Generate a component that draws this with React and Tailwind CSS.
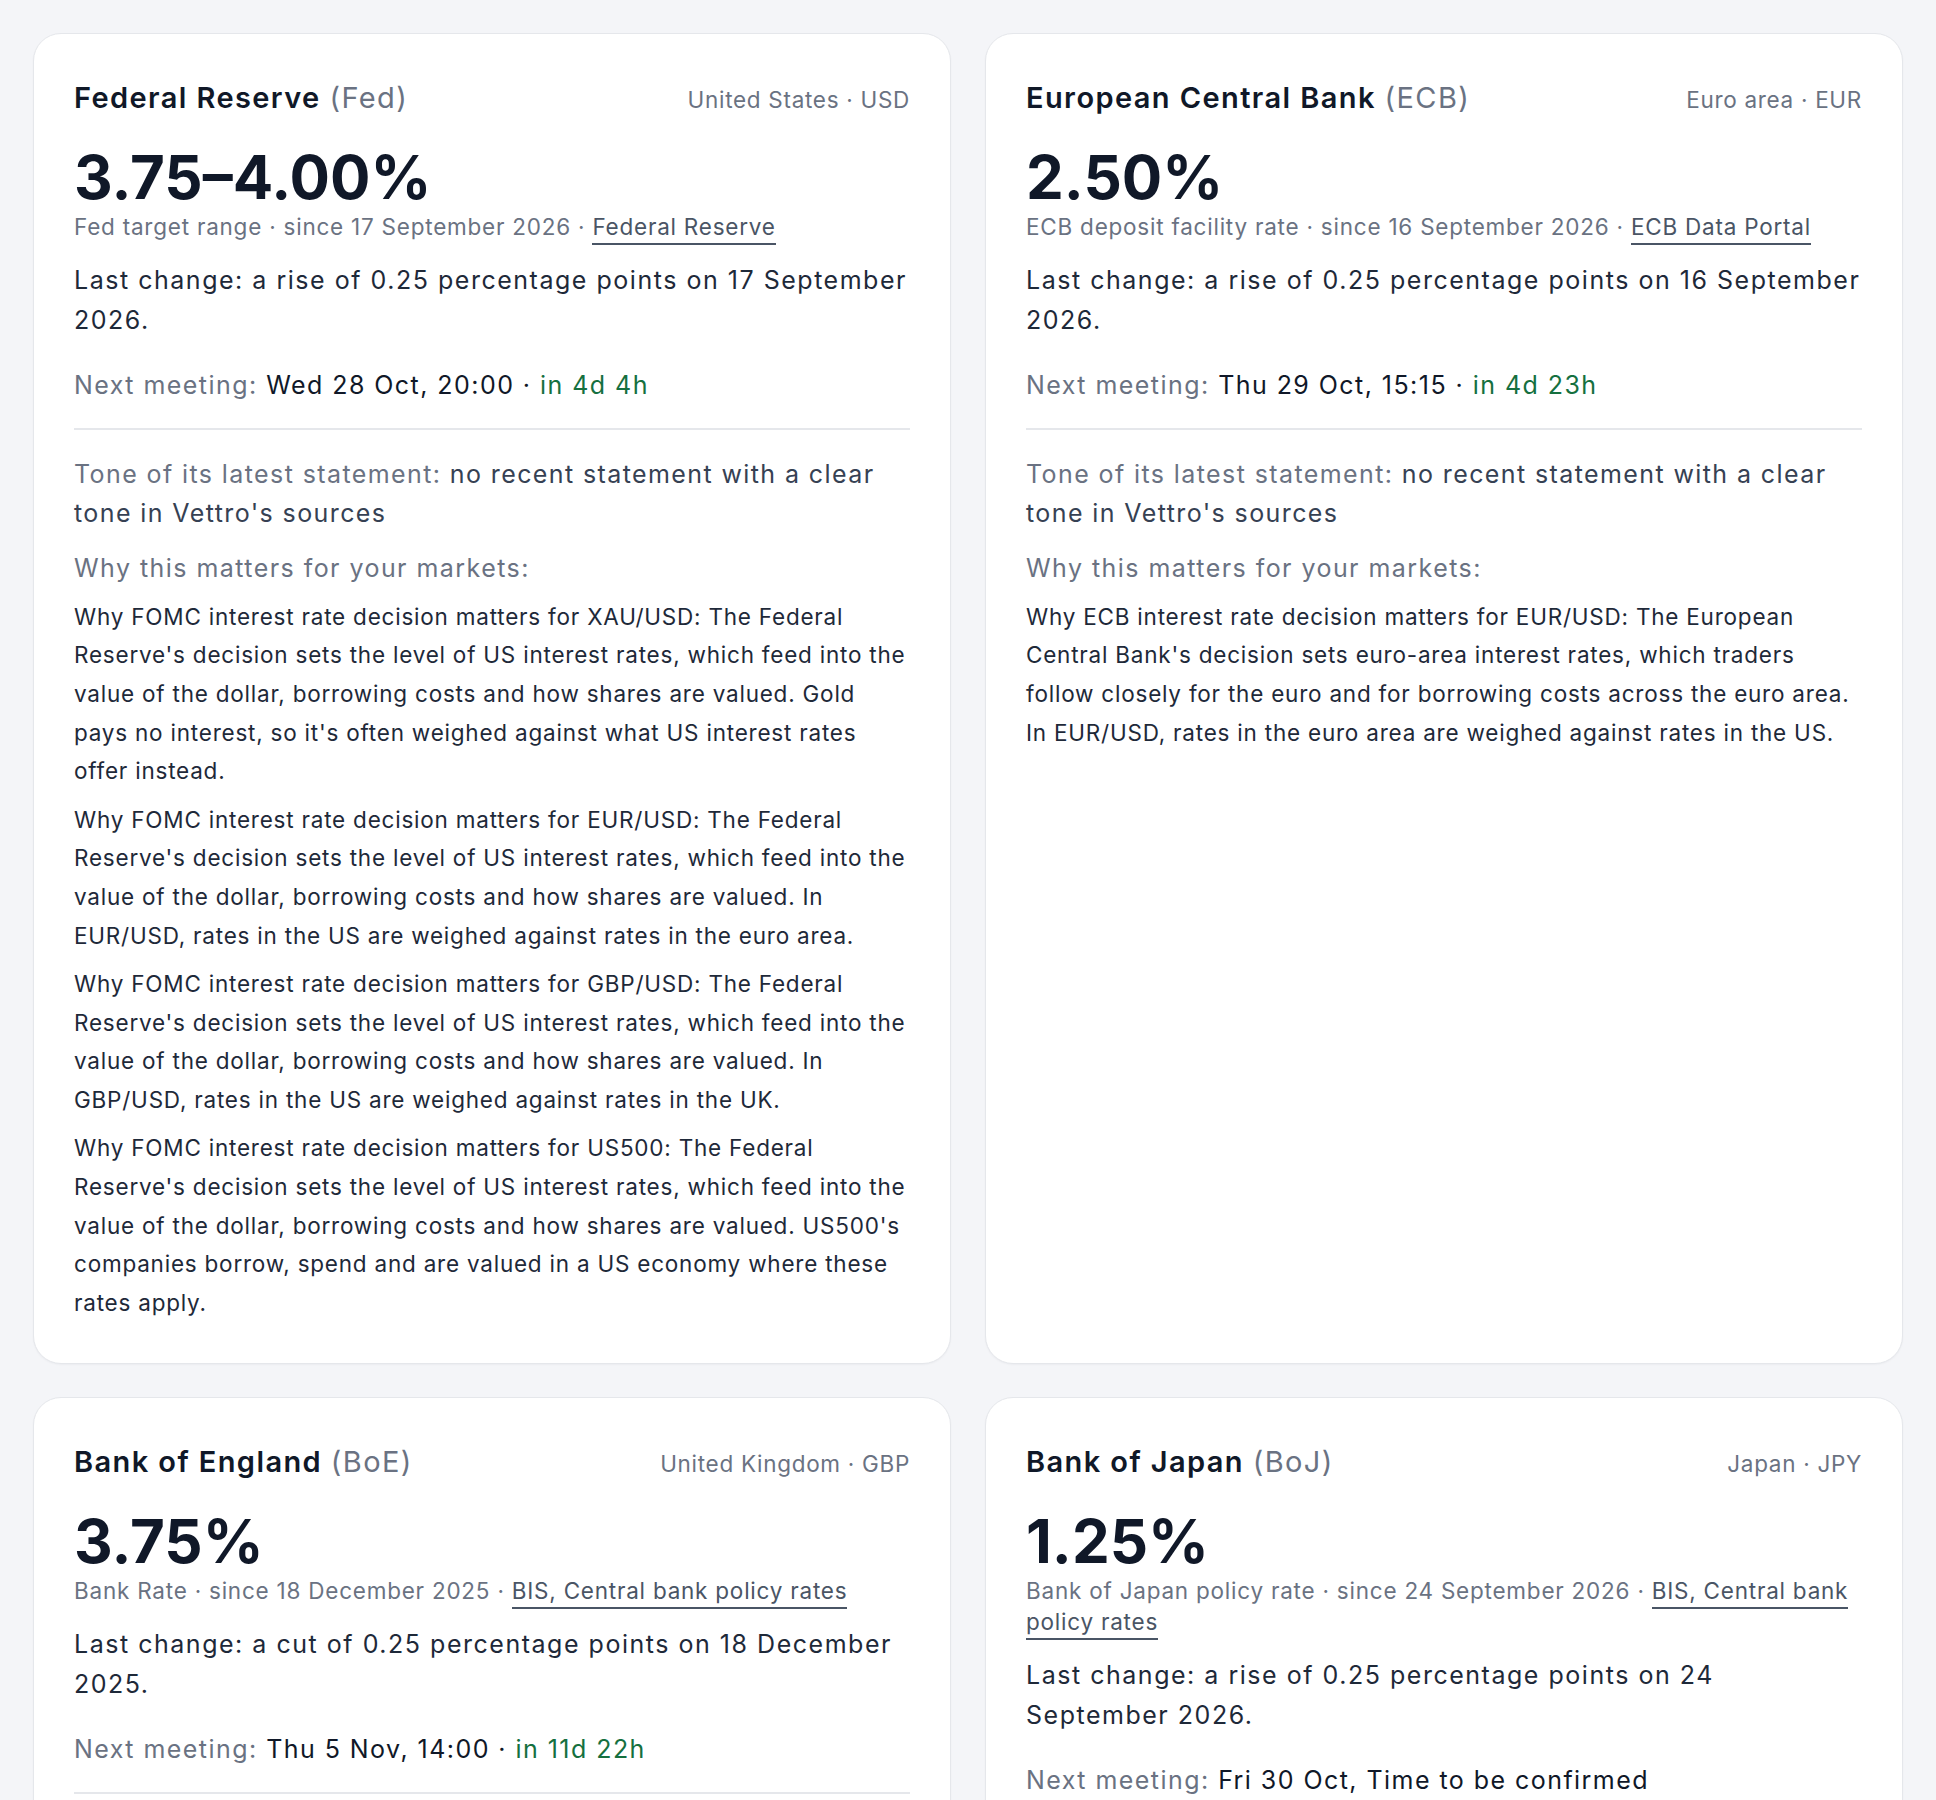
import React from 'react';

const banks = [
    {
        name: 'Federal Reserve',
        short: 'Fed',
        region: 'United States · USD',
        rate: '3.75–4.00%',
        rateName: 'Fed target range',
        since: '17 September 2026',
        source: 'Federal Reserve',
        lastChange: 'a rise of 0.25 percentage points on 17 September 2026.',
        meeting: 'Wed 28 Oct, 20:00',
        countdown: 'in 4d 4h',
        tone: "no recent statement with a clear tone in Vettro's sources",
        reasons: [
            "Why FOMC interest rate decision matters for XAU/USD: The Federal Reserve's decision sets the level of US interest rates, which feed into the value of the dollar, borrowing costs and how shares are valued. Gold pays no interest, so it's often weighed against what US interest rates offer instead.",
            "Why FOMC interest rate decision matters for EUR/USD: The Federal Reserve's decision sets the level of US interest rates, which feed into the value of the dollar, borrowing costs and how shares are valued. In EUR/USD, rates in the US are weighed against rates in the euro area.",
            "Why FOMC interest rate decision matters for GBP/USD: The Federal Reserve's decision sets the level of US interest rates, which feed into the value of the dollar, borrowing costs and how shares are valued. In GBP/USD, rates in the US are weighed against rates in the UK.",
            "Why FOMC interest rate decision matters for US500: The Federal Reserve's decision sets the level of US interest rates, which feed into the value of the dollar, borrowing costs and how shares are valued. US500's companies borrow, spend and are valued in a US economy where these rates apply.",
        ],
    },
    {
        name: 'European Central Bank',
        short: 'ECB',
        region: 'Euro area · EUR',
        rate: '2.50%',
        rateName: 'ECB deposit facility rate',
        since: '16 September 2026',
        source: 'ECB Data Portal',
        lastChange: 'a rise of 0.25 percentage points on 16 September 2026.',
        meeting: 'Thu 29 Oct, 15:15',
        countdown: 'in 4d 23h',
        tone: "no recent statement with a clear tone in Vettro's sources",
        reasons: [
            "Why ECB interest rate decision matters for EUR/USD: The European Central Bank's decision sets euro-area interest rates, which traders follow closely for the euro and for borrowing costs across the euro area. In EUR/USD, rates in the euro area are weighed against rates in the US.",
        ],
    },
    {
        name: 'Bank of England',
        short: 'BoE',
        region: 'United Kingdom · GBP',
        rate: '3.75%',
        rateName: 'Bank Rate',
        since: '18 December 2025',
        source: 'BIS, Central bank policy rates',
        lastChange: 'a cut of 0.25 percentage points on 18 December 2025.',
        meeting: 'Thu 5 Nov, 14:00',
        countdown: 'in 11d 22h',
        tone: "no recent statement with a clear tone in Vettro's sources",
        reasons: [
            "Why BoE interest rate decision matters for GBP/USD: The Bank of England's decision sets UK interest rates, which feed into the value of the pound and borrowing costs across the UK. In GBP/USD, rates in the UK are weighed against rates in the US.",
        ],
    },
    {
        name: 'Bank of Japan',
        short: 'BoJ',
        region: 'Japan · JPY',
        rate: '1.25%',
        rateName: 'Bank of Japan policy rate',
        since: '24 September 2026',
        source: 'BIS, Central bank policy rates',
        lastChange: 'a rise of 0.25 percentage points on 24 September 2026.',
        meeting: 'Fri 30 Oct, Time to be confirmed',
        countdown: null,
        tone: "no recent statement with a clear tone in Vettro's sources",
        reasons: [
            "Why BoJ interest rate decision matters for USD/JPY: The Bank of Japan's decision sets Japanese interest rates, which feed into the value of the yen. In USD/JPY, rates in Japan are weighed against rates in the US.",
        ],
    },
];

function BankCard({ bank }) {
    return (
        <div className="bg-white border border-gray-200 rounded-[28px] shadow-[0_1px_2px_rgba(16,24,40,0.04)] p-[40px]">
            {/* Header: bank name + region */}
            <div className="flex items-baseline justify-between">
                <h2 className="text-[29px] leading-[48px] font-semibold tracking-[1.4px] text-gray-900">
                    {bank.name} <span className="font-normal text-gray-500">({bank.short})</span>
                </h2>
                <span className="text-[22.5px] leading-[48px] tracking-[0.7px] text-gray-500">{bank.region}</span>
            </div>

            {/* Current rate */}
            <div className="mt-[19px] text-[60px] leading-[68px] font-bold text-gray-900">{bank.rate}</div>
            <p className="text-[22.5px] leading-[31px] tracking-[0.77px] text-gray-500">
                {bank.rateName} · since {bank.since} ·{' '}
                <a href="#" className="text-gray-600 border-b-2 border-gray-600 pb-[3px]">{bank.source}</a>
            </p>

            <p className="mt-[18px] text-[25px] leading-[40px] tracking-[1.52px] text-gray-800">
                Last change: {bank.lastChange}
            </p>

            <p className="mt-[25px] text-[25px] leading-[40px] tracking-[1.45px] text-gray-900">
                <span className="text-gray-500">Next meeting:</span> {bank.meeting}
                {bank.countdown && (
                    <>
                        {' · '}
                        <span className="text-[#15703f]">{bank.countdown}</span>
                    </>
                )}
            </p>

            <div className="mt-[23px] border-t-2 border-gray-200" />

            {/* Statement tone and market notes */}
            <p className="mt-[25px] text-[25px] leading-[39px] tracking-[1.4px] text-gray-700">
                <span className="text-gray-500">Tone of its latest statement:</span> {bank.tone}
            </p>
            <p className="mt-[15px] text-[25px] leading-[40px] tracking-[1.45px] text-gray-500">Why this matters for your markets:</p>
            {bank.reasons.map((reason, i) => (
                <p key={i} className="mt-[9.5px] text-[22.5px] leading-[38.7px] tracking-[0.78px] text-gray-800">
                    {reason}
                </p>
            ))}
        </div>
    );
}

export default function App() {
    return (
        <div className="min-h-screen bg-[#f4f5f8] p-[33px] font-['Inter',sans-serif]">
            <div className="grid grid-cols-2 gap-x-[34px] gap-y-[33px]">
                {banks.map((bank) => (
                    <BankCard key={bank.short} bank={bank} />
                ))}
            </div>
        </div>
    );
}
